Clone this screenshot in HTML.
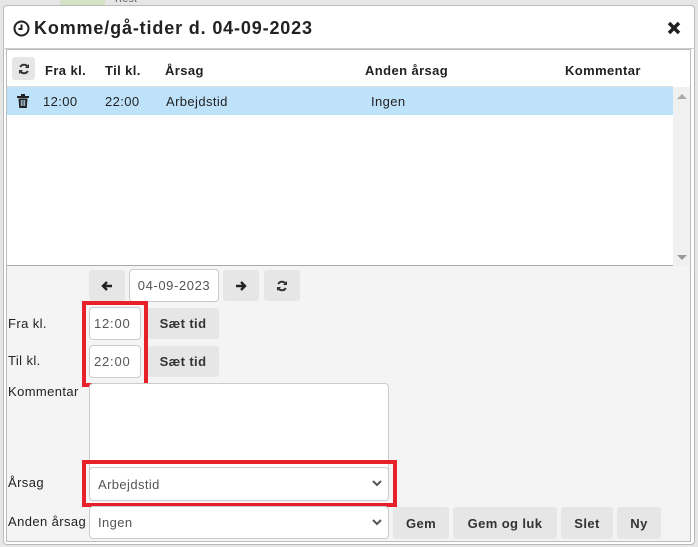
<!DOCTYPE html>
<html><head><meta charset="utf-8"><style>
*{box-sizing:border-box;margin:0;padding:0}
body{width:698px;height:547px;overflow:hidden;background:#e6e6e6;font-family:"Liberation Sans","DejaVu Sans",sans-serif;font-size:13px;color:#222;position:relative;letter-spacing:0.4px}
.abs{position:absolute}
.dlg{left:3px;top:5px;width:692px;height:540px;background:#fff;border:1px solid #bbb;border-radius:4px}
.btn{position:absolute;background:#e6e6e6;border-radius:3px;font-weight:bold;font-size:13px;color:#333;display:flex;align-items:center;justify-content:center}
.inp{position:absolute;background:#fff;border:1px solid #ccc;border-radius:4px;color:#555;font-size:13px;display:flex;align-items:center}
.red{position:absolute;border:4px solid #e8202a}
.lbl{position:absolute;font-size:13px;color:#222}
.chev{position:absolute;right:6px;top:50%;margin-top:-4px}
</style></head><body>
<div class="abs" style="left:60px;top:0;width:45px;height:5px;background:#d6e2c6"></div>
<div class="abs" style="left:115px;top:-6px;font-size:10px;color:#555">Rest</div>
<div class="abs dlg"></div>
<svg class="abs" style="left:13px;top:20px" width="17" height="17" viewBox="0 0 17 17"><circle cx="8.5" cy="8.5" r="7" fill="none" stroke="#222" stroke-width="2"/><path d="M8.5 4.5V9H5.5" fill="none" stroke="#222" stroke-width="2"/></svg>
<div class="abs" style="left:34px;top:18px;font-size:18px;font-weight:bold;color:#222;letter-spacing:0.85px">Komme/gå-tider d. 04-09-2023</div>
<svg class="abs" style="left:667px;top:21px" width="14" height="14" viewBox="0 0 14 14"><path d="M2 2L12 12M12 2L2 12" stroke="#222" stroke-width="3.5"/></svg>
<div class="abs" style="left:3px;top:48px;width:692px;height:1px;background:#ccc"></div>
<div class="abs" style="left:6px;top:49px;width:685px;height:493px;border:1px solid #bbb;background:#f4f4f4"></div>
<div class="abs" style="left:7px;top:50px;width:683px;height:216px;background:#fff;border-bottom:1px solid #aaa"></div>
<div class="btn" style="left:12px;top:57px;width:23px;height:23px"><svg width="12" height="12" viewBox="0 0 12 12"><path d="M10 4.5A4.3 4.3 0 0 0 2.2 4M2 7.5A4.3 4.3 0 0 0 9.8 8" fill="none" stroke="#333" stroke-width="2"/><path d="M11 1v4H7zM1 11V7h4z" fill="#333"/></svg></div>
<div class="abs" style="left:45px;top:63px;font-weight:bold">Fra kl.</div>
<div class="abs" style="left:105px;top:63px;font-weight:bold">Til kl.</div>
<div class="abs" style="left:165px;top:63px;font-weight:bold">Årsag</div>
<div class="abs" style="left:365px;top:63px;font-weight:bold">Anden årsag</div>
<div class="abs" style="left:565px;top:63px;font-weight:bold">Kommentar</div>
<div class="abs" style="left:7px;top:86px;width:666px;height:1px;background:#ddd"></div>
<div class="abs" style="left:7px;top:87px;width:666px;height:28px;background:#bfe2fb"></div>
<svg class="abs" style="left:17px;top:94px" width="12" height="14" viewBox="0 0 12 14"><path d="M0 2h12v2H0zM4 0h4v2H4z" fill="#222"/><path d="M1.5 4.5h9l-.7 9.5H2.2z" fill="#222"/><path d="M4.3 6v6M6 6v6M7.7 6v6" stroke="#bfe2fb" stroke-width=".9"/></svg>
<div class="abs" style="left:43px;top:94px">12:00</div>
<div class="abs" style="left:105px;top:94px">22:00</div>
<div class="abs" style="left:166px;top:94px">Arbejdstid</div>
<div class="abs" style="left:371px;top:94px">Ingen</div>
<div class="abs" style="left:673px;top:87px;width:17px;height:179px;background:#f0f0f0"></div>
<div class="abs" style="left:677px;top:94px;width:0;height:0;border-left:5px solid transparent;border-right:5px solid transparent;border-bottom:5px solid #aaa"></div>
<div class="abs" style="left:677px;top:255px;width:0;height:0;border-left:5px solid transparent;border-right:5px solid transparent;border-top:5px solid #999"></div>

<div class="btn" style="left:89px;top:270px;width:36px;height:31px"><svg width="12" height="12" viewBox="0 0 12 12"><path d="M11 6H2M6 2L2 6l4 4" fill="none" stroke="#222" stroke-width="2.4"/></svg></div>
<div class="inp" style="left:129px;top:269px;width:90px;height:33px;justify-content:center;letter-spacing:0.6px">04-09-2023</div>
<div class="btn" style="left:223px;top:270px;width:36px;height:31px"><svg width="12" height="12" viewBox="0 0 12 12"><path d="M1 6h9M6 2l4 4-4 4" fill="none" stroke="#222" stroke-width="2.4"/></svg></div>
<div class="btn" style="left:264px;top:270px;width:36px;height:31px"><svg width="12" height="12" viewBox="0 0 12 12"><path d="M10 4.5A4.3 4.3 0 0 0 2.2 4M2 7.5A4.3 4.3 0 0 0 9.8 8" fill="none" stroke="#333" stroke-width="2"/><path d="M11 1v4H7zM1 11V7h4z" fill="#333"/></svg></div>

<div class="lbl" style="left:8px;top:316px">Fra kl.</div>
<div class="inp" style="left:89px;top:307px;width:52px;height:33px;padding-left:4px;letter-spacing:0.8px">12:00</div>
<div class="btn" style="left:147px;top:308px;width:72px;height:31px">Sæt tid</div>
<div class="lbl" style="left:8px;top:353px">Til kl.</div>
<div class="inp" style="left:89px;top:345px;width:52px;height:33px;padding-left:4px;letter-spacing:0.8px">22:00</div>
<div class="btn" style="left:147px;top:346px;width:72px;height:31px">Sæt tid</div>
<div class="red" style="left:82px;top:301px;width:66px;height:86px"></div>

<div class="lbl" style="left:8px;top:384px">Kommentar</div>
<div class="inp" style="left:89px;top:383px;width:300px;height:90px"></div>
<div class="lbl" style="left:8px;top:475px">Årsag</div>
<div class="inp" style="left:89px;top:467px;width:300px;height:34px;padding-left:8px">Arbejdstid<svg class="chev" width="10" height="7" viewBox="0 0 10 7"><path d="M1 1l4 4 4-4" fill="none" stroke="#555" stroke-width="2"/></svg></div>
<div class="red" style="left:82px;top:460px;width:315px;height:47px"></div>
<div class="lbl" style="left:8px;top:514px">Anden årsag</div>
<div class="inp" style="left:89px;top:506px;width:300px;height:33px;padding-left:8px">Ingen<svg class="chev" width="10" height="7" viewBox="0 0 10 7"><path d="M1 1l4 4 4-4" fill="none" stroke="#555" stroke-width="2"/></svg></div>
<div class="btn" style="left:393px;top:507px;width:56px;height:32px">Gem</div>
<div class="btn" style="left:453px;top:507px;width:104px;height:32px">Gem og luk</div>
<div class="btn" style="left:561px;top:507px;width:52px;height:32px">Slet</div>
<div class="btn" style="left:617px;top:507px;width:44px;height:32px">Ny</div>
</body></html>
